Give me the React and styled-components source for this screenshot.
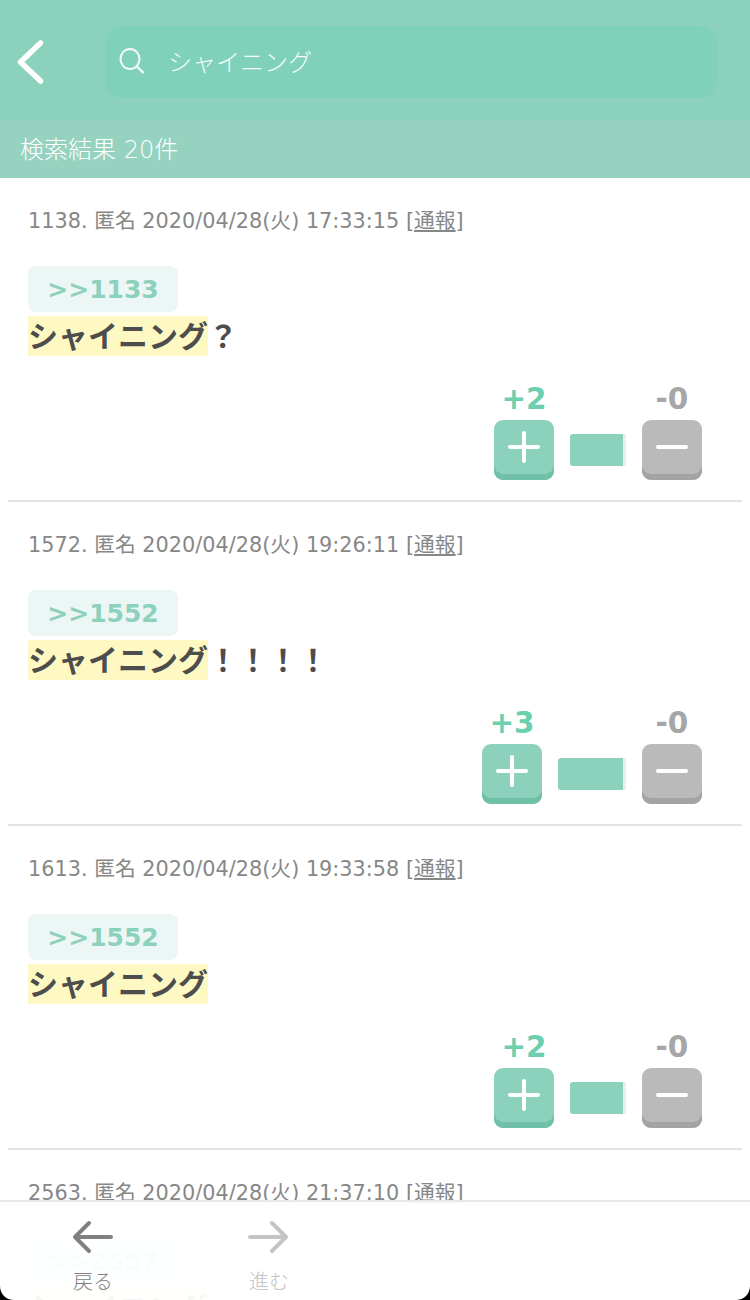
import React from 'react'
import styled, { createGlobalStyle } from 'styled-components'

const posts = [
  { no: 1138, time: '17:33:15', anchor: 1133, tail: '？', plus: 2, bar: 56 },
  { no: 1572, time: '19:26:11', anchor: 1552, tail: '！！！！', plus: 3, bar: 68 },
  { no: 1613, time: '19:33:58', anchor: 1552, tail: '', plus: 2, bar: 56 },
  { no: 2563, time: '21:37:10', anchor: 2557, tail: '', plus: 1, bar: 56 }
]

const GlobalStyle = createGlobalStyle`
  html, body {
    margin: 0;
    padding: 0;
    background: #fff;
    overflow: hidden;
  }
  body {
    font-family: "DejaVu Sans", "Noto Sans CJK JP", sans-serif;
  }
`

const Root = styled.div`
  position: relative;
  width: 750px;
  height: 1300px;
  overflow: hidden;
  background: #fff;
`

const Header = styled.header`
  height: 120px;
  display: flex;
  align-items: center;
  padding: 0 33px 0 16px;
  box-sizing: border-box;
  background: #8bd1bc;
`

const Back = styled.svg`
  width: 30px;
  height: 46px;
  margin-right: 59px;
  margin-top: 4px;
`

const SearchBox = styled.div`
  flex: 1;
  height: 72px;
  margin-top: 3px;
  display: flex;
  align-items: center;
  padding-left: 14px;
  border-radius: 18px;
  background: #7fd1ba;
  color: #f2fbf8;
  font-family: "Noto Sans CJK JP", sans-serif;
  font-size: 24px;
  font-weight: 300;
`

const Query = styled.span`
  margin-left: 23px;
  position: relative;
  top: -1px;
`

const SearchIcon = styled.svg`
  width: 26px;
  height: 26px;
  margin-top: -2px;
`

const Count = styled.div`
  height: 58px;
  display: flex;
  align-items: center;
  padding: 0 0 4px 20px;
  box-sizing: border-box;
  background: #95d2c0;
  color: #fff;
  font-family: "DejaVu Sans", "Noto Sans CJK JP", sans-serif;
  font-size: 24px;
  font-weight: 300;
`

const Post = styled.article`
  height: 324px;
  box-sizing: border-box;
  margin: 0 8px;
  padding: 31px 20px 0;
  border-bottom: 2px solid #e3e3e3;
`

const Meta = styled.div`
  height: 24px;
  line-height: 24px;
  color: #878787;
  font-size: 20.8px;
  white-space: nowrap;
`

const Report = styled.span`
  text-decoration: underline;
`

const Anchor = styled.div`
  width: 150px;
  height: 46px;
  margin-top: 33px;
  display: flex;
  align-items: center;
  justify-content: center;
  border-radius: 8px;
  background: #ebf6f5;
  color: #8bd1bc;
  font-size: 25px;
  font-weight: bold;
`

const Body = styled.div`
  margin-top: 4px;
  height: 40px;
  line-height: 37px;
  display: flex;
  align-items: flex-start;
  color: #4d4d4d;
  font-family: "Noto Sans CJK JP", sans-serif;
  font-size: 30px;
  font-weight: 700;
`

const Mark = styled.span`
  height: 40px;
  background: #fef9c3;
`

const Votes = styled.div`
  display: flex;
  justify-content: flex-end;
  align-items: flex-end;
  margin-top: 25px;
  padding-right: 20px;
`

const VoteColumn = styled.div`
  width: 60px;
  display: flex;
  flex-direction: column;
  align-items: center;
`

const Score = styled.div`
  height: 36px;
  line-height: 36px;
  margin-bottom: 3px;
  font-size: 29.5px;
  font-weight: bold;
  color: ${p => p.$minus ? '#a6a6a6' : '#6ccfae'};
`

const VoteButton = styled.div`
  width: 60px;
  height: 60px;
  box-sizing: border-box;
  padding-bottom: 6px;
  display: flex;
  align-items: center;
  justify-content: center;
  border-radius: 9px;
  background: ${p => p.$minus ? '#bababa' : '#8bd1bc'};
  box-shadow: inset 0 -6px 0 ${p => p.$minus ? '#a3a3a3' : '#70bfa7'};
`

const Bar = styled.div`
  height: 32px;
  margin: 0 16px 14px;
  box-sizing: border-box;
  border-radius: 3px 0 0 3px;
  background: #8bd1bc;
  border-right: 3px solid #e4f1ed;
`

const BottomNav = styled.nav`
  position: absolute;
  left: 0;
  right: 0;
  bottom: 0;
  height: 100px;
  display: flex;
  box-sizing: border-box;
  border-top: 2px solid #e8e8e8;
  background: rgba(255, 255, 255, 0.95);
`

const NavItem = styled.div`
  width: 88px;
  margin-left: ${p => p.$first ? '49px' : '88px'};
  display: flex;
  flex-direction: column;
  align-items: center;
  color: ${p => p.$disabled ? '#c4c4c4' : '#808080'};
  font-family: "Noto Sans CJK JP", sans-serif;
  font-size: 20px;
  font-weight: 300;
`

const NavIcon = styled.svg`
  width: 44px;
  height: 36px;
  margin: 17px 0 14px;
`

const NavLabel = styled.span`
  line-height: 24px;
`

const Corner = styled.svg`
  position: absolute;
  bottom: 0;
  width: 14px;
  height: 14px;
  ${p => p.$right ? 'right: 0;' : 'left: 0;'}
`

const PostItem = ({ post }) => (
  <Post>
    <Meta>{post.no}. 匿名 2020/04/28(火) {post.time} [<Report>通報</Report>]</Meta>
    <Anchor>&gt;&gt;{post.anchor}</Anchor>
    <Body><Mark>シャイニング</Mark>{post.tail}</Body>
    <Votes>
      <VoteColumn>
        <Score>+{post.plus}</Score>
        <VoteButton>
          <svg width="32" height="32" viewBox="0 0 32 32">
            <path d="M16 2v28M2 16h28" stroke="#fff" strokeWidth="4" strokeLinecap="round" />
          </svg>
        </VoteButton>
      </VoteColumn>
      <Bar style={{ width: post.bar }} />
      <VoteColumn>
        <Score $minus>-0</Score>
        <VoteButton $minus>
          <svg width="32" height="32" viewBox="0 0 32 32">
            <path d="M2 16h28" stroke="#fff" strokeWidth="4" strokeLinecap="round" />
          </svg>
        </VoteButton>
      </VoteColumn>
    </Votes>
  </Post>
)

export default function App () {
  return (
    <Root>
      <GlobalStyle />
      <Header>
        <Back viewBox="0 0 30 46">
          <path d="M24.500 4 4.500 23l20 19" fill="none" stroke="#fff" strokeWidth="5.500" strokeLinecap="round" strokeLinejoin="round" />
        </Back>
        <SearchBox>
          <SearchIcon viewBox="0 0 26 26">
            <ellipse cx="11" cy="11" rx="9.500" ry="10" fill="none" stroke="#f2fbf8" strokeWidth="2" />
            <path d="m18 18.500 6 6" stroke="#f2fbf8" strokeWidth="2.400" strokeLinecap="round" />
          </SearchIcon>
          <Query>シャイニング</Query>
        </SearchBox>
      </Header>
      <Count>検索結果 20件</Count>
      {posts.map(p => <PostItem key={p.no} post={p} />)}
      <BottomNav>
        <NavItem $first>
          <NavIcon viewBox="0 0 44 36">
            <path d="M40 18H4M18 4 4 18l14 14" fill="none" stroke="#808080" strokeWidth="4" strokeLinecap="round" strokeLinejoin="round" />
          </NavIcon>
          <NavLabel>戻る</NavLabel>
        </NavItem>
        <NavItem $disabled>
          <NavIcon viewBox="0 0 44 36">
            <path d="M3 18h36M25 4l14 14-14 14" fill="none" stroke="#c4c4c4" strokeWidth="4" strokeLinecap="round" strokeLinejoin="round" />
          </NavIcon>
          <NavLabel>進む</NavLabel>
        </NavItem>
      </BottomNav>
      <Corner viewBox="0 0 14 14"><path d="M0 0C0 8 6 14 14 14H0Z" fill="#000" /></Corner>
      <Corner $right viewBox="0 0 14 14"><path d="M14 0C14 8 8 14 0 14H14Z" fill="#000" /></Corner>
    </Root>
  )
}
